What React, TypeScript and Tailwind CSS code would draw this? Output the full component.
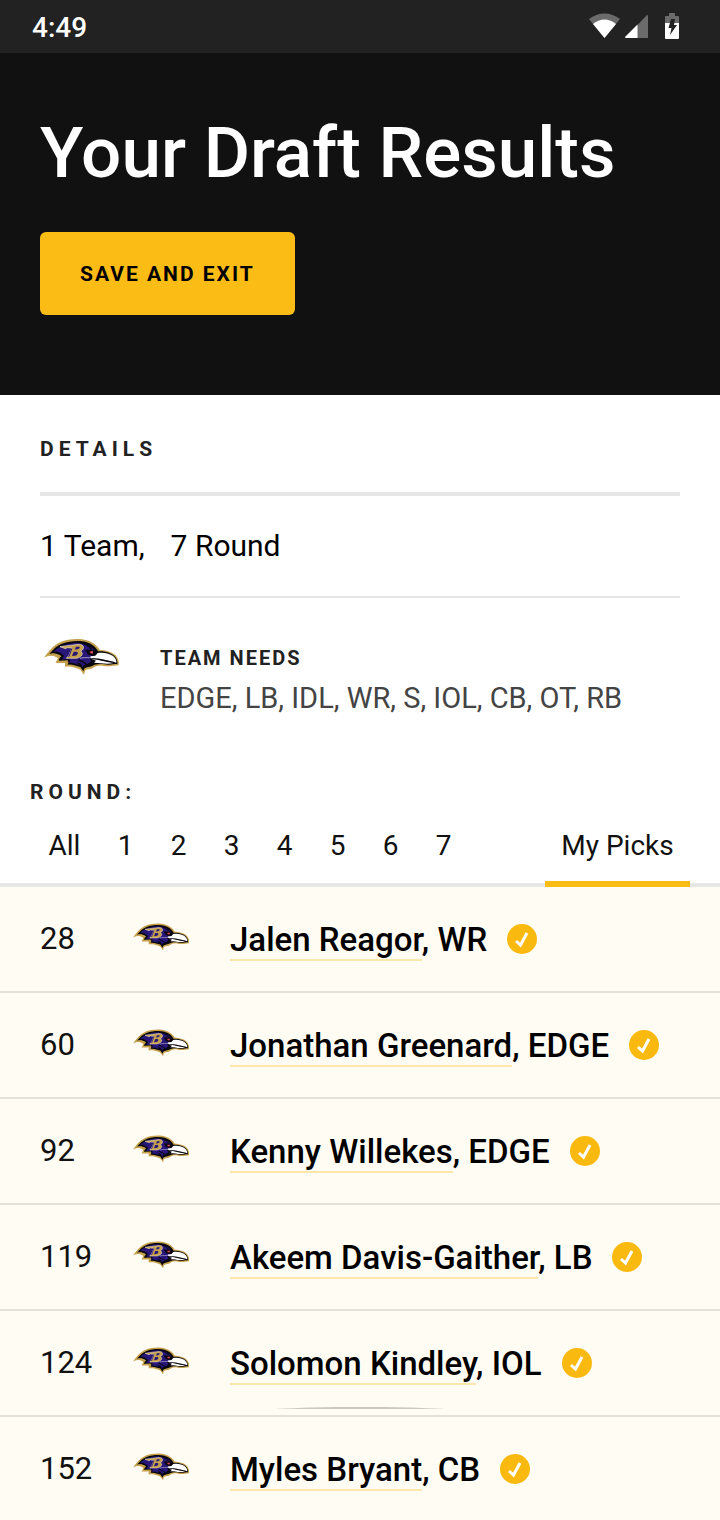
const picks = [
  { number: 28, name: "Jalen Reagor", position: "WR" },
  { number: 60, name: "Jonathan Greenard", position: "EDGE" },
  { number: 92, name: "Kenny Willekes", position: "EDGE" },
  { number: 119, name: "Akeem Davis-Gaither", position: "LB" },
  { number: 124, name: "Solomon Kindley", position: "IOL" },
  { number: 152, name: "Myles Bryant", position: "CB" },
];

const rounds = ["1", "2", "3", "4", "5", "6", "7"];

function RavensLogo({ className }: { className: string }) {
  return (
    <svg viewBox="30 35 240 120" className={className} role="img" aria-label="Baltimore Ravens">
      {/* gold outline */}
      <path
        fill="#c5a04d"
        d="M42 97C56 78 70 60 90 51C115 40 150 39 170 45C190 51 202 61 208 73C226 74 246 79 256 89C263 96 268 107 266 120C250 121 238 125 222 122C208 118 196 122 189 128C180 133 167 131 165 137L162 148L151 133L140 129C130 124 117 123 105 124L106 113L78 113L86 97C68 89 56 90 42 97Z"
      />
      {/* black layer */}
      <path
        fill="#08070d"
        d="M58 86C68 73 80 61 96 55C120 46 150 45 168 50C186 55 198 66 204 78C224 77 243 82 253 92C260 99 263 108 262 116C248 116 238 120 224 117C207 114 194 117 186 122C178 126 165 125 162 132L160 138L151 125C138 122 128 116 111 118L114 105L87 106L94 92C80 84 70 82 58 86Z"
      />
      {/* purple plumage */}
      <path
        fill="#281779"
        d="M70 79C82 67 98 60 112 57C136 50 158 51 171 58C182 63 191 70 195 78L179 79L172 86L190 93L178 98L184 108L172 116L161 120L158 127L153 115L139 110L147 119C137 116 128 111 117 113L120 102L104 102L95 104L102 91C90 80 81 77 70 79Z"
      />
      <path
        d="M146 52C163 54 178 61 184 72M145 104C155 107 164 112 171 118M91 95L88 105M119 106L113 116"
        fill="none"
        stroke="#08070d"
        strokeWidth="4"
      />
      {/* gold feather tips */}
      <path fill="#c5a04d" d="M49 94C60 83 76 82 91 93L83 109L76 113L84 99C70 88 58 88 49 94ZM105 111L116 109L112 120L105 124Z" />
      {/* crest letter shape */}
      <path
        fill="#c5a04d"
        stroke="#eee4c5"
        strokeWidth="2"
        d="M90 64L146 57C163 57 165 70 152 78C163 84 154 98 137 99L109 99L116 91L126 68L112 67L106 70Z"
      />
      <path
        fill="#281779"
        d="M138 64L147 64C152 65 148 71 141 72L134 73ZM131 79L141 79C146 82 143 90 135 91L126 92Z"
      />
      <path d="M126 69L116 95" stroke="#281779" strokeWidth="3" />
      {/* beak */}
      <path
        fill="#fff"
        d="M181 93L196 91L203 83C220 80 239 84 249 92C256 98 260 106 259 112L244 108C225 104 209 99 183 99Z"
      />
      <path fill="#fff" d="M184 101C201 101 224 110 251 113C229 118 211 112 192 112L198 106Z" />
      <path d="M188 101C209 99 229 108 254 111" fill="none" stroke="#08070d" strokeWidth="1.5" />
      <path d="M150 99C162 95 174 98 186 97" fill="none" stroke="#ddd9ee" strokeWidth="2" />
      <path fill="#08070d" d="M165 73L190 73L197 84L186 88L174 87Z" />
      <path fill="#d42c48" d="M178 79L189 77L188 85L181 84Z" />
      <circle cx="186" cy="80" r="1.5" fill="#fff" />
    </svg>
  );
}

function StatusIcons() {
  return (
    <div className="flex items-center pb-[2px]">
      {/* wifi */}
      <svg viewBox="0 0 31 26" className="h-[26px] w-[31px]" aria-hidden="true">
        <path fill="#6b6b6b" d="M0 6C9-1.5 22-1.5 31 6L15.500 25Z" />
        <path fill="#fff" d="M4 11C11 5 20 5 27 11L15.500 25Z" />
      </svg>
      {/* signal */}
      <svg viewBox="0 0 23 23" className="mt-[2px] ml-[5px] size-[23px]" aria-hidden="true">
        <path fill="#6b6b6b" d="M22 0Q23 0 23 1V23H0Z" />
        <path fill="#fff" d="M12.500 9.500V23H1Q0 23 0 22Z" />
      </svg>
      {/* battery */}
      <svg viewBox="0 0 14 26" className="ml-[17px] h-[26px] w-[14px]" aria-hidden="true">
        <path fill="#6b6b6b" d="M4 0H10V3H13Q14 3 14 4V11H0V4Q0 3 1 3H4Z" />
        <path fill="#fff" d="M0 10H14V25Q14 26 13 26H1Q0 26 0 25Z" />
        <path fill="#222" d="M6 6H10L9 12H12L5 22L6.500 15H3.500Z" />
      </svg>
    </div>
  );
}

function CheckBadge() {
  return (
    <svg viewBox="0 0 30 30" className="size-[30px] shrink-0" role="img" aria-label="Your pick">
      <circle cx="15" cy="15" r="15" fill="#fab90f" />
      <path d="M9 17L13.500 21L20 9" fill="none" stroke="#fff" strokeWidth="3" />
    </svg>
  );
}

export default function App() {
  return (
    <div className="relative w-full overflow-hidden bg-white font-[Roboto,'Liberation_Sans',sans-serif] text-black">
      {/* Status bar */}
      <div className="flex h-[53px] items-center justify-between bg-[#222] pr-[41px] pl-8 text-white">
        <span className="pt-[2px] text-[28px] font-medium">4:49</span>
        <StatusIcons />
      </div>

      {/* Header */}
      <header className="bg-[#111] px-10 pt-[58px] pb-20">
        <h1 className="text-[71px] leading-[84px] font-medium text-white">Your Draft Results</h1>
        <button className="mt-[37px] h-[83px] rounded-md bg-[#fbbc16] px-10 pt-[2px] text-[21px] font-bold tracking-[2px] text-black">
          SAVE AND EXIT
        </button>
      </header>

      {/* Details */}
      <section className="px-10 pt-[42px]">
        <h2 className="border-b-4 border-[#e6e6e6] pb-[31px] text-[21px] leading-6 font-bold tracking-[5px] text-[#222]">
          DETAILS
        </h2>
        <div className="flex h-[102px] items-center gap-[26px] border-b-2 border-[#e6e6e6] pb-[2px] text-[30px]">
          <span>1 Team,</span>
          <span>7 Round</span>
        </div>
        <div className="flex gap-10 pt-[39px]">
          <RavensLogo className="h-10 w-20 shrink-0" />
          <div className="pt-[9px]">
            <h3 className="text-[20px] leading-6 font-bold tracking-[2px] text-[#222]">TEAM NEEDS</h3>
            <p className="mt-2 text-[29px] leading-10 text-[#444]">EDGE, LB, IDL, WR, S, IOL, CB, OT, RB</p>
          </div>
        </div>
      </section>

      {/* Round tabs */}
      <section className="pt-[62px]">
        <h2 className="px-[30px] text-[21px] leading-6 font-bold tracking-[5px] text-[#222]">ROUND:</h2>
        <nav className="flex border-b-4 border-[#e6e6e6] px-[30px] text-[28px] leading-9 text-[#111]">
          <button className="h-[79px] w-[69px] pt-1">All</button>
          {rounds.map((round) => (
            <button key={round} className="h-[79px] w-[53px] pt-1">
              {round}
            </button>
          ))}
          <button className="-mb-1 ml-auto h-[83px] w-[145px] border-b-6 border-[#fbbc16] pt-[6px]">My Picks</button>
        </nav>
      </section>

      {/* Picks */}
      <ul className="bg-[#fffcf3]">
        {picks.map((pick) => (
          <li key={pick.number} className="flex h-[106px] items-center border-b-2 border-[#e5e2da] px-10">
            <span className="w-[90px] text-[31px] text-[#111]">{pick.number}</span>
            <RavensLogo className="mr-10 mb-1 h-[30px] w-[60px] shrink-0" />
            <span className="mr-5 pt-[2px] text-[33px] leading-10 font-medium whitespace-nowrap">
              <a href="#" className="border-b-2 border-[#fde7a8]">{pick.name}</a>, {pick.position}
            </span>
            <CheckBadge />
          </li>
        ))}
      </ul>

      {/* Bottom sheet edge */}
      <svg
        viewBox="0 0 170 2"
        className="absolute top-[1407px] left-1/2 h-[2px] w-[170px] -translate-x-1/2"
        aria-hidden="true"
      >
        <path fill="#cbc8c1" d="M0 2Q40 0 60 0H110Q130 0 170 2Z" />
      </svg>
    </div>
  );
}
